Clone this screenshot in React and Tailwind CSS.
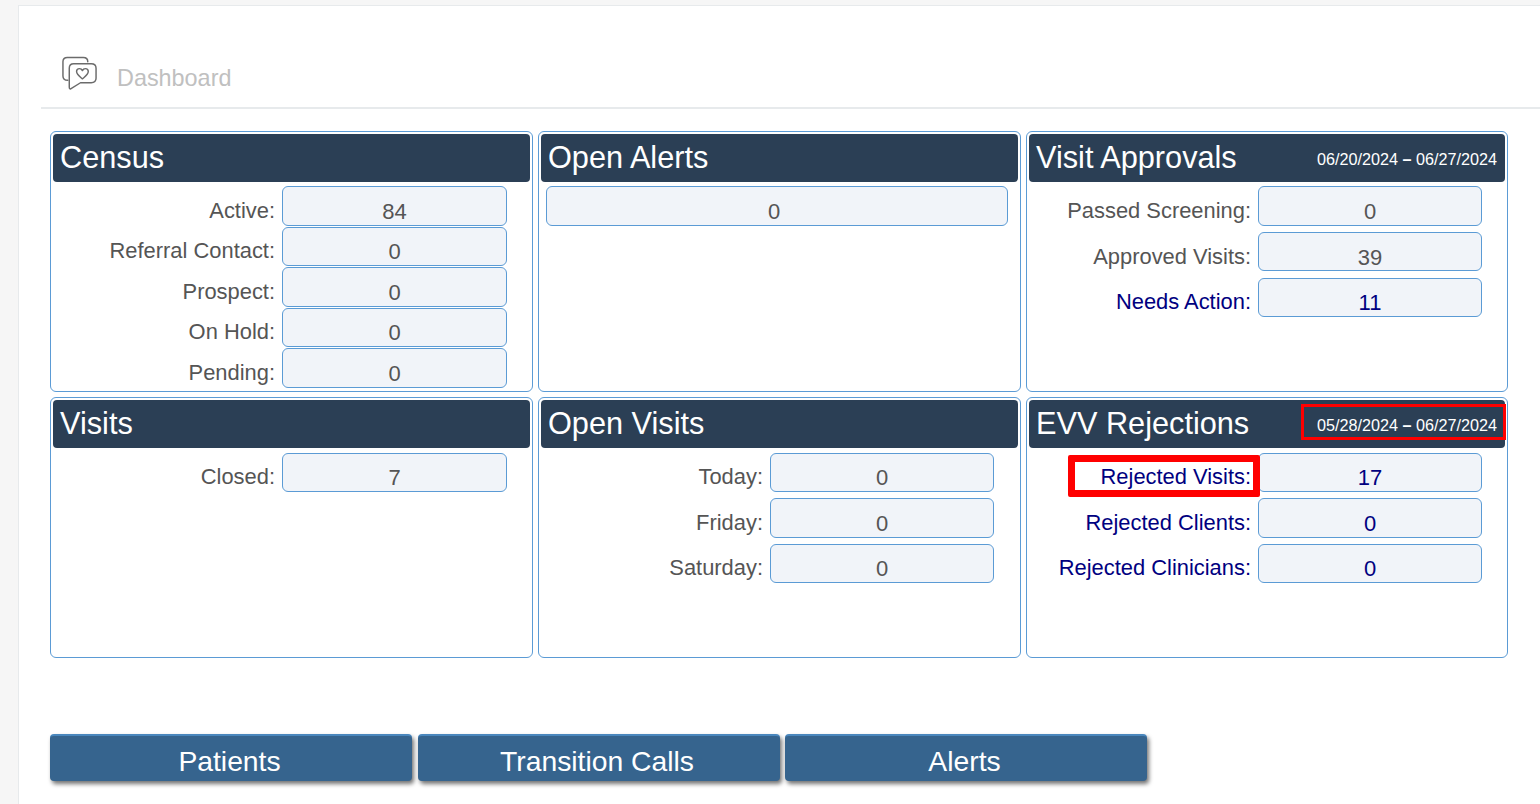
const F = { fontFamily: '"Liberation Sans", Arial, sans-serif' };

function Row({ label, value, link, gap = 'mb-[1px]', w = 'w-[225px]' }) {
  return (
    <div className={`flex items-stretch h-[39.5px] ${gap}`}>
      <div className={`w-[225px] flex items-center justify-end text-[21.9px] leading-none pr-[7px] ${link ? 'text-[#000080]' : 'text-[#555555]'}`}>
        <span className="relative top-[5px] whitespace-nowrap">{label}</span>
      </div>
      <div className={`${w} rounded-[6px] border border-[#5b9bd5] bg-[#f1f4f9] flex items-center justify-center text-[22px] leading-none ${link ? 'text-[#000080]' : 'text-[#555555]'}`}>
        <span className="relative top-[6px]">{value}</span>
      </div>
    </div>
  );
}

function Card({ title, from, to, dateBox, lower, children }) {
  return (
    <div className="relative h-[261px] border border-[#5b9bd5] rounded-[6px] bg-white p-[2px]">
      <div className="h-[48px] rounded-[4px] bg-[#2b3f55] text-white flex items-center justify-between pl-[7px] pr-[8px]">
        <span className="text-[30.7px] leading-none whitespace-nowrap">{title}</span>
        {from && (
          <span className="relative top-[1px] text-[16.2px] leading-none whitespace-nowrap">
            {from} <span className="font-bold">–</span> {to}
          </span>
        )}
      </div>
      {dateBox && <div className="absolute top-[6px] right-[1px] w-[205px] h-[36px] border-[3px] border-[#ff0000]" />}
      <div className={`${lower ? 'pt-[4.5px]' : 'pt-[4px]'} pl-[4px]`}>{children}</div>
    </div>
  );
}

function Btn({ children }) {
  return (
    <div className="w-[362px] h-[47px] rounded-[4px] bg-[#36648e] border-t-2 border-[#4a87bd] text-white text-[28.3px] leading-none flex items-center justify-center pr-[3px] shadow-[2px_3px_4px_rgba(0,0,0,0.55)]">
      <span className="relative top-[3px]">{children}</span>
    </div>
  );
}

function ChatIcon() {
  return (
    <svg width="37" height="37" viewBox="0 0 38 38" fill="none" strokeWidth="1.5" strokeLinejoin="round" strokeLinecap="round" stroke="#6b6b6b">
      <path d="M7 26 C3.5 26 2 24.5 2 21.5 V7 C2 4 3.5 2.5 6.5 2.5 H23 C26 2.5 27.5 4 27.5 7" />
      <path d="M13 9 H31 C34.5 9 36 10.5 36 13.5 V24 C36 27 34.5 28.500 31 28.500 H20 L9.500 35 C8.500 35 8.500 34 8.500 33 V13.500 C8.500 10.500 10 9 13 9 Z" />
      <path d="M22 24.500 C19 22 16 20 16 17 C16 15 17.500 14 19 14 C20.300 14 21.400 14.700 22 16 C22.600 14.700 23.700 14 25 14 C26.500 14 28 15 28 17 C28 20 25 22 22 24.500 Z" />
    </svg>
  );
}

export default function App() {
  return (
    <div className="h-[804px] w-[1540px] overflow-hidden bg-[#f6f6f6] pt-[5px] pl-[18px]" style={F}>
      <div className="h-[820px] bg-white border border-[#e7eaec] border-r-0">
        <div className="h-[103px] ml-[22px] border-b-2 border-[#e7eaec] flex items-start pl-[20px] pt-[49px]">
          <ChatIcon />
          <span className="ml-[19px] mt-[12px] text-[23.4px] leading-none text-[#c0c0c0]">Dashboard</span>
        </div>
        <div className="grid grid-cols-[483px_483px_482px] gap-x-[5px] gap-y-[5px] ml-[31px] mt-[22px]">
          <Card title="Census">
            <Row label="Active:" value="84" />
            <Row label="Referral Contact:" value="0" />
            <Row label="Prospect:" value="0" />
            <Row label="On Hold:" value="0" />
            <Row label="Pending:" value="0" />
          </Card>
          <Card title="Open Alerts">
            <div className="ml-[1px] w-[462px] h-[40px] rounded-[6px] border border-[#5b9bd5] bg-[#f1f4f9] flex items-center justify-center pr-[6px] text-[22px] leading-none text-[#555555]">
              <span className="relative top-[6px]">0</span>
            </div>
          </Card>
          <Card title="Visit Approvals" from="06/20/2024" to="06/27/2024">
            <Row label="Passed Screening:" value="0" gap="mb-[6.25px]" w="w-[224px]" />
            <Row label="Approved Visits:" value="39" gap="mb-[6.25px]" w="w-[224px]" />
            <Row label="Needs Action:" value="11" link gap="mb-[6.25px]" w="w-[224px]" />
          </Card>
          <Card title="Visits" lower>
            <Row label="Closed:" value="7" />
          </Card>
          <Card title="Open Visits" lower>
            <Row label="Today:" value="0" gap="mb-[6px]" w="w-[224px]" />
            <Row label="Friday:" value="0" gap="mb-[6px]" w="w-[224px]" />
            <Row label="Saturday:" value="0" gap="mb-[6px]" w="w-[224px]" />
          </Card>
          <Card title="EVV Rejections" from="05/28/2024" to="06/27/2024" dateBox lower>
            <div className="relative">
              <Row label="Rejected Visits:" value="17" link gap="mb-[6px]" w="w-[224px]" />
              <div className="absolute left-[35px] top-[2px] w-[192px] h-[42px] border-[7px] border-[#ff0000] rounded-[2px]" />
              <Row label="Rejected Clients:" value="0" link gap="mb-[6px]" w="w-[224px]" />
              <Row label="Rejected Clinicians:" value="0" link gap="mb-[6px]" w="w-[224px]" />
            </div>
          </Card>
        </div>
        <div className="flex gap-[5.5px] ml-[31px] mt-[76px]">
          <Btn>Patients</Btn>
          <Btn>Transition Calls</Btn>
          <Btn>Alerts</Btn>
        </div>
      </div>
    </div>
  );
}
